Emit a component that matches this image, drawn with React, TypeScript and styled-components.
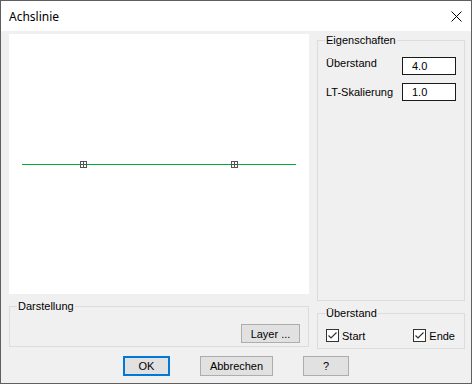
import React from 'react';
import styled, { createGlobalStyle } from 'styled-components';

const GlobalStyle = createGlobalStyle`
  html, body {
    margin: 0;
    padding: 0;
    background: #ffffff;
  }
  body {
    font-family: "Liberation Sans", Arial, sans-serif;
    font-size: 11px;
    color: #000000;
  }
`;

const CheckIcon: React.FC = () => (
  <svg width="11" height="11" viewBox="0 0 11 11">
    <path d="M1.5 5.5 L4 8 L9.5 2.5" fill="none" stroke="#333" strokeWidth="1.2" />
  </svg>
);

const Checkbox: React.FC<{ label: string }> = ({ label }) => (
  <CheckLabel>
    <CheckBox>
      <CheckIcon />
    </CheckBox>
    <span>{label}</span>
  </CheckLabel>
);

const App: React.FC = () => {
  return (
    <>
      <GlobalStyle />
      <Window>
        <TitleBar>
          <Title>Achslinie</Title>
          <CloseButton aria-label="Schließen">
            <svg width="11" height="11" viewBox="0 0 11 11">
              <path d="M0.5 0.5 L10.5 10.5 M10.5 0.5 L0.5 10.5" stroke="#000" strokeWidth="1" />
            </svg>
          </CloseButton>
        </TitleBar>

        <Content>
          <LeftColumn>
            <Preview>
              <svg width="300" height="260" viewBox="0 0 300 260">
                <line x1="13" y1="130.5" x2="287" y2="130.5" stroke="#00aa33" strokeWidth="1" />
                {[71, 222].map((x) => (
                  <g key={x} stroke="#555" strokeWidth="1" fill="#fff">
                    <rect x={x + 0.5} y={127.5} width="6" height="6" />
                    <line x1={x + 3.5} y1={127.5} x2={x + 3.5} y2={133.5} />
                    <line x1={x + 0.5} y1={130.5} x2={x + 6.5} y2={130.5} />
                  </g>
                ))}
              </svg>
            </Preview>

            <Group $height={47} $top={6}>
              <Legend>Darstellung</Legend>
              <GroupActions>
                <Button $width={59} $height={19}>Layer ...</Button>
              </GroupActions>
            </Group>
          </LeftColumn>

          <RightColumn>
            <Group $height={267}>
              <Legend>Eigenschaften</Legend>
              <FieldGrid>
                <FieldLabel $shift={0}>Überstand</FieldLabel>
                <Input defaultValue="4.0" />
                <FieldLabel $shift={3}>LT-Skalierung</FieldLabel>
                <Input defaultValue="1.0" />
              </FieldGrid>
            </Group>

            <Group $height={42} $top={6}>
              <Legend>Überstand</Legend>
              <CheckRow>
                <Checkbox label="Start" />
                <Checkbox label="Ende" />
              </CheckRow>
            </Group>
          </RightColumn>
        </Content>

        <Footer>
          <Button $width={47} $height={20} $default>OK</Button>
          <Button $width={73} $height={20}>Abbrechen</Button>
          <Button $width={46} $height={20}>?</Button>
        </Footer>
      </Window>
    </>
  );
};

const Window = styled.div`
  box-sizing: border-box;
  width: 472px;
  height: 384px;
  border: 1px solid #5f5f5f;
  background: #f0f0f0;
  display: flex;
  flex-direction: column;
`;

const TitleBar = styled.div`
  height: 30px;
  flex-shrink: 0;
  background: #ffffff;
  display: flex;
  align-items: center;
  justify-content: space-between;
  padding: 0 9px 0 8px;
`;

const Title = styled.span`
  font-family: "Noto Sans", "Open Sans", sans-serif;
  font-size: 12px;
  color: #000;
`;

const CloseButton = styled.span`
  display: flex;
  align-items: center;
  margin-top: 1px;
`;

const Content = styled.div`
  display: flex;
  gap: 8px;
  padding: 3px 0 0 8px;
`;

const LeftColumn = styled.div`
  width: 300px;
  display: flex;
  flex-direction: column;
`;

const RightColumn = styled.div`
  width: 148px;
  display: flex;
  flex-direction: column;
`;

const Preview = styled.div`
  height: 260px;
  background: #ffffff;
  svg {
    display: block;
  }
`;

const Group = styled.fieldset<{ $height: number; $top?: number }>`
  box-sizing: border-box;
  height: ${(p) => p.$height}px;
  margin: ${(p) => p.$top ?? 0}px 0 0 0;
  padding: 0 8px;
  min-width: 0;
  border: 1px solid #dcdcdc;
`;

const Legend = styled.legend`
  padding: 0 1px;
  margin-left: -1px;
  line-height: 13px;
  font-size: 11px;
  color: #000;
`;

const GroupActions = styled.div`
  height: 30px;
  display: flex;
  justify-content: flex-end;
  align-items: flex-end;
`;

const FieldGrid = styled.div`
  display: grid;
  grid-template-columns: 1fr 54px;
  row-gap: 8px;
  padding-top: 10px;
`;

const FieldLabel = styled.span<{ $shift: number }>`
  padding-top: ${(p) => p.$shift}px;
  line-height: 13px;
`;

const Input = styled.input`
  box-sizing: border-box;
  width: 54px;
  height: 18px;
  margin: 0;
  padding: 0 0 0 9px;
  border: 1px solid #1a1a1a;
  background: #ffffff;
  font-family: "Liberation Sans", Arial, sans-serif;
  font-size: 11px;
  color: #000;
  outline: none;
`;

const CheckRow = styled.div`
  display: flex;
  justify-content: space-between;
  align-items: center;
  padding: 9px 1px 0 0;
`;

const CheckLabel = styled.label`
  display: flex;
  align-items: center;
  gap: 3px;
`;

const CheckBox = styled.span`
  box-sizing: border-box;
  width: 13px;
  height: 13px;
  border: 1px solid #333333;
  background: #ffffff;
  display: flex;
  align-items: center;
  justify-content: center;
`;

const Footer = styled.div`
  display: flex;
  justify-content: center;
  gap: 30px;
  padding-top: 7px;
`;

const Button = styled.button<{ $width: number; $height: number; $default?: boolean }>`
  box-sizing: border-box;
  width: ${(p) => p.$width}px;
  height: ${(p) => p.$height}px;
  margin: 0;
  padding: 0;
  background: #e1e1e1;
  border: ${(p) => (p.$default ? '2px solid #0078d7' : '1px solid #adadad')};
  font-family: "Liberation Sans", Arial, sans-serif;
  font-size: 11px;
  color: #000;
`;

export default App;
